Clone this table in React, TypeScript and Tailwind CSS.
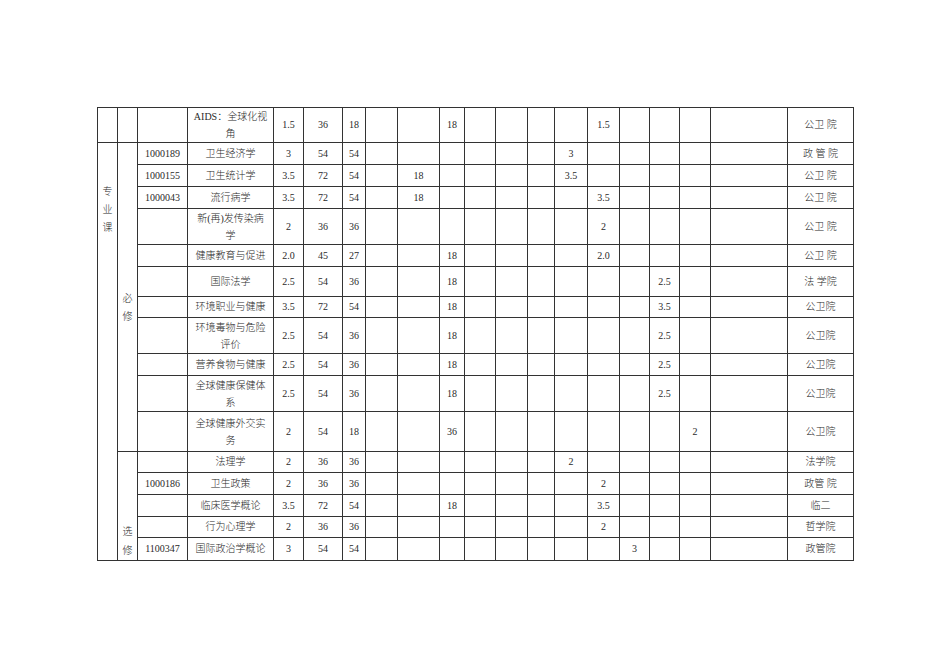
import React from "react";

type Row = {
  h: number;
  code?: string;
  name: string[];
  c: string;
  t: string;
  l: string;
  x: Record<number, string>;
  col: string;
};

const rows: Row[] = [
  { h: 35, name: ["AIDS：全球化视", "角"], c: "1.5", t: "36", l: "18", x: { 9: "18", 14: "1.5" }, col: "公卫 院" },
  { h: 22, code: "1000189", name: ["卫生经济学"], c: "3", t: "54", l: "54", x: { 13: "3" }, col: "政 管 院" },
  { h: 22, code: "1000155", name: ["卫生统计学"], c: "3.5", t: "72", l: "54", x: { 8: "18", 13: "3.5" }, col: "公卫 院" },
  { h: 22, code: "1000043", name: ["流行病学"], c: "3.5", t: "72", l: "54", x: { 8: "18", 14: "3.5" }, col: "公卫 院" },
  { h: 36, name: ["新(再)发传染病", "学"], c: "2", t: "36", l: "36", x: { 14: "2" }, col: "公卫 院" },
  { h: 22, name: ["健康教育与促进"], c: "2.0", t: "45", l: "27", x: { 9: "18", 14: "2.0" }, col: "公卫 院" },
  { h: 30, name: ["国际法学"], c: "2.5", t: "54", l: "36", x: { 9: "18", 16: "2.5" }, col: "法 学院" },
  { h: 21, name: ["环境职业与健康"], c: "3.5", t: "72", l: "54", x: { 9: "18", 16: "3.5" }, col: "公卫院" },
  { h: 36, name: ["环境毒物与危险", "评价"], c: "2.5", t: "54", l: "36", x: { 9: "18", 16: "2.5" }, col: "公卫院" },
  { h: 22, name: ["营养食物与健康"], c: "2.5", t: "54", l: "36", x: { 9: "18", 16: "2.5" }, col: "公卫院" },
  { h: 36, name: ["全球健康保健体", "系"], c: "2.5", t: "54", l: "36", x: { 9: "18", 16: "2.5" }, col: "公卫院" },
  { h: 40, name: ["全球健康外交实", "务"], c: "2", t: "54", l: "18", x: { 9: "36", 17: "2" }, col: "公卫院" },
  { h: 21, name: ["法理学"], c: "2", t: "36", l: "36", x: { 13: "2" }, col: "法学院" },
  { h: 22, code: "1000186", name: ["卫生政策"], c: "2", t: "36", l: "36", x: { 14: "2" }, col: "政管 院" },
  { h: 22, name: ["临床医学概论"], c: "3.5", t: "72", l: "54", x: { 9: "18", 14: "3.5" }, col: "临二" },
  { h: 21, name: ["行为心理学"], c: "2", t: "36", l: "36", x: { 14: "2" }, col: "哲学院" },
  { h: 23, code: "1100347", name: ["国际政治学概论"], c: "3", t: "54", l: "54", x: { 15: "3" }, col: "政管院" },
];

const widths = [20, 20, 50, 86, 30, 39, 23, 32, 42, 25, 31, 32, 27, 33, 32, 30, 30, 31, 77, 66];

const td = "border border-[#333] p-0 text-center align-middle";

export default function App() {
  return (
    <div
      className="w-[950px] h-[672px] bg-white pt-[107px] pl-[97px] text-[#2a2a2a] text-[10px] leading-[18px] font-light"
      style={{ fontFamily: '"Liberation Serif", "Noto Sans CJK SC", serif' }}
    >
      <table className="table-fixed border-collapse w-[756px]">
        <colgroup>
          {widths.map((w, i) => (
            <col key={i} style={{ width: w }} />
          ))}
        </colgroup>
        <tbody>
          {rows.map((r, i) => {
            const extras = [];
            for (let k = 7; k <= 18; k++) {
              extras.push(
                <td key={k} className={td}>
                  {r.x[k] ?? ""}
                </td>
              );
            }
            return (
              <tr key={i} style={{ height: r.h }}>
                {i === 0 && <td className={td}></td>}
                {i === 0 && <td className={td}></td>}
                {i === 1 && (
                  <td rowSpan={16} className="border border-[#333] p-0 text-center align-top">
                    <div className="pt-[40px] flex flex-col items-center">
                      <span>专</span>
                      <span>业</span>
                      <span>课</span>
                    </div>
                  </td>
                )}
                {i === 1 && (
                  <td rowSpan={11} className="border border-[#333] p-0 text-center align-top">
                    <div className="pt-[147px] flex flex-col items-center">
                      <span>必</span>
                      <span>修</span>
                    </div>
                  </td>
                )}
                {i === 12 && (
                  <td rowSpan={5} className="border border-[#333] p-0 text-center align-bottom">
                    <div className="flex flex-col items-center leading-[19px]">
                      <span>选</span>
                      <span>修</span>
                    </div>
                  </td>
                )}
                <td className={td}>{r.code ?? ""}</td>
                <td className={td}>
                  {r.name.map((n, j) => (
                    <div
                      key={j}
                      className={
                        r.name.length > 1
                          ? "whitespace-nowrap leading-[17px]"
                          : "whitespace-nowrap"
                      }
                    >
                      {n}
                    </div>
                  ))}
                </td>
                <td className={td}>{r.c}</td>
                <td className={td}>{r.t}</td>
                <td className={td}>{r.l}</td>
                {extras}
                <td className={td}>{r.col}</td>
              </tr>
            );
          })}
        </tbody>
      </table>
    </div>
  );
}
